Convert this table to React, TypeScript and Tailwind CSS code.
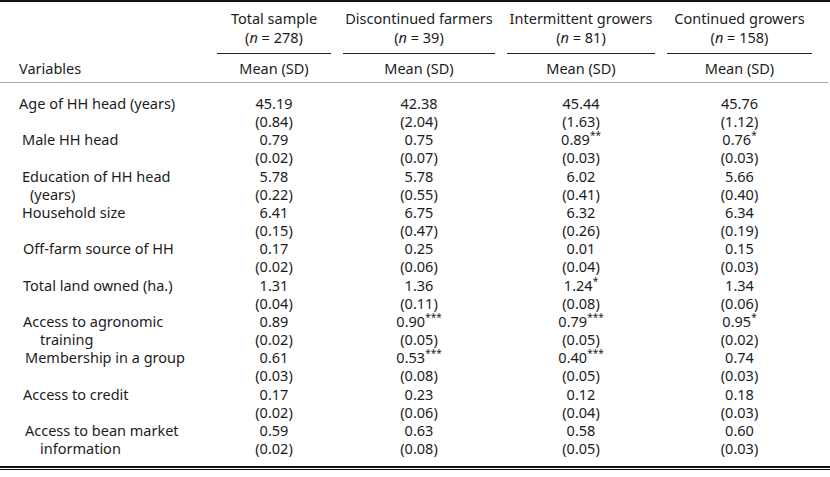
const groups = [
  { name: "Total sample", n: "278" },
  { name: "Discontinued farmers", n: "39" },
  { name: "Intermittent growers", n: "81" },
  { name: "Continued growers", n: "158" },
];

type Cell = { v: string; s?: string };

type Row = {
  label: string;
  cont?: string;
  pad: string;
  contPad?: string;
  mean: Cell[];
  sd: string[];
};

const rows: Row[] = [
  {
    label: "Age of HH head (years)",
    pad: "pl-[19px]",
    mean: [{ v: "45.19" }, { v: "42.38" }, { v: "45.44" }, { v: "45.76" }],
    sd: ["(0.84)", "(2.04)", "(1.63)", "(1.12)"],
  },
  {
    label: "Male HH head",
    pad: "pl-[22px]",
    mean: [{ v: "0.79" }, { v: "0.75" }, { v: "0.89", s: "**" }, { v: "0.76", s: "*" }],
    sd: ["(0.02)", "(0.07)", "(0.03)", "(0.03)"],
  },
  {
    label: "Education of HH head",
    cont: "(years)",
    pad: "pl-[22px]",
    contPad: "pl-[30px]",
    mean: [{ v: "5.78" }, { v: "5.78" }, { v: "6.02" }, { v: "5.66" }],
    sd: ["(0.22)", "(0.55)", "(0.41)", "(0.40)"],
  },
  {
    label: "Household size",
    pad: "pl-[22px]",
    mean: [{ v: "6.41" }, { v: "6.75" }, { v: "6.32" }, { v: "6.34" }],
    sd: ["(0.15)", "(0.47)", "(0.26)", "(0.19)"],
  },
  {
    label: "Off-farm source of HH",
    pad: "pl-[23px]",
    mean: [{ v: "0.17" }, { v: "0.25" }, { v: "0.01" }, { v: "0.15" }],
    sd: ["(0.02)", "(0.06)", "(0.04)", "(0.03)"],
  },
  {
    label: "Total land owned (ha.)",
    pad: "pl-[23px]",
    mean: [{ v: "1.31" }, { v: "1.36" }, { v: "1.24", s: "*" }, { v: "1.34" }],
    sd: ["(0.04)", "(0.11)", "(0.08)", "(0.06)"],
  },
  {
    label: "Access to agronomic",
    cont: "training",
    pad: "pl-[23px]",
    contPad: "pl-[40px]",
    mean: [{ v: "0.89" }, { v: "0.90", s: "***" }, { v: "0.79", s: "***" }, { v: "0.95", s: "*" }],
    sd: ["(0.02)", "(0.05)", "(0.05)", "(0.02)"],
  },
  {
    label: "Membership in a group",
    pad: "pl-[25px]",
    mean: [{ v: "0.61" }, { v: "0.53", s: "***" }, { v: "0.40", s: "***" }, { v: "0.74" }],
    sd: ["(0.03)", "(0.08)", "(0.05)", "(0.03)"],
  },
  {
    label: "Access to credit",
    pad: "pl-[23px]",
    mean: [{ v: "0.17" }, { v: "0.23" }, { v: "0.12" }, { v: "0.18" }],
    sd: ["(0.02)", "(0.06)", "(0.04)", "(0.03)"],
  },
  {
    label: "Access to bean market",
    cont: "information",
    pad: "pl-[25px]",
    contPad: "pl-[40px]",
    mean: [{ v: "0.59" }, { v: "0.63" }, { v: "0.58" }, { v: "0.60" }],
    sd: ["(0.02)", "(0.08)", "(0.05)", "(0.03)"],
  },
];

const grid = "grid grid-cols-[211px_126px_164px_160px_157px_12px]";

export default function App() {
  return (
    <div
      className="w-[830px] h-[477px] bg-white text-[#1c1c1c] text-[14.5px] leading-[18px]"
      style={{ fontFamily: '"Noto Sans", "Open Sans", sans-serif' }}
    >
      <div className="border-t-2 border-[#111]">
        {/* group headings */}
        <div className={`${grid} pt-[7px]`}>
          <div />
          {groups.map((g) => (
            <div key={g.name} className="px-[6px] text-center">
              <div className="leading-[19px]">{g.name}</div>
              <div className="leading-[19px]">
                (<i>n</i> = {g.n})
              </div>
              <div className="mt-[6px] border-t border-[#222]" />
            </div>
          ))}
          <div />
        </div>

        <div className={`${grid} pt-[5px] pb-[5px] border-b border-[#a8a8a8] mr-[2px]`}>
          <div className="pl-[19px]">Variables</div>
          {groups.map((g) => (
            <div key={g.name} className="text-center">
              Mean (SD)
            </div>
          ))}
          <div />
        </div>

        {/* body */}
        <div className="pt-[11px] pb-[9px]">
          {rows.map((r) => (
            <div key={r.label} className={`${grid} leading-[18.15px]`}>
              <div className="whitespace-nowrap">
                <div className={r.pad}>{r.label}</div>
                {r.cont && <div className={r.contPad}>{r.cont}</div>}
              </div>
              {r.mean.map((m, i) => (
                <div key={i} className="text-center">
                  <div>
                    {m.v}
                    {m.s && (
                      <span className="inline-block align-top text-[10px] leading-[10px]">{m.s}</span>
                    )}
                  </div>
                  <div>{r.sd[i]}</div>
                </div>
              ))}
              <div />
            </div>
          ))}
        </div>

        <div className="border-t-2 border-[#111]" />
        <div className="mt-[1px] border-t border-[#111]" />
      </div>
    </div>
  );
}
